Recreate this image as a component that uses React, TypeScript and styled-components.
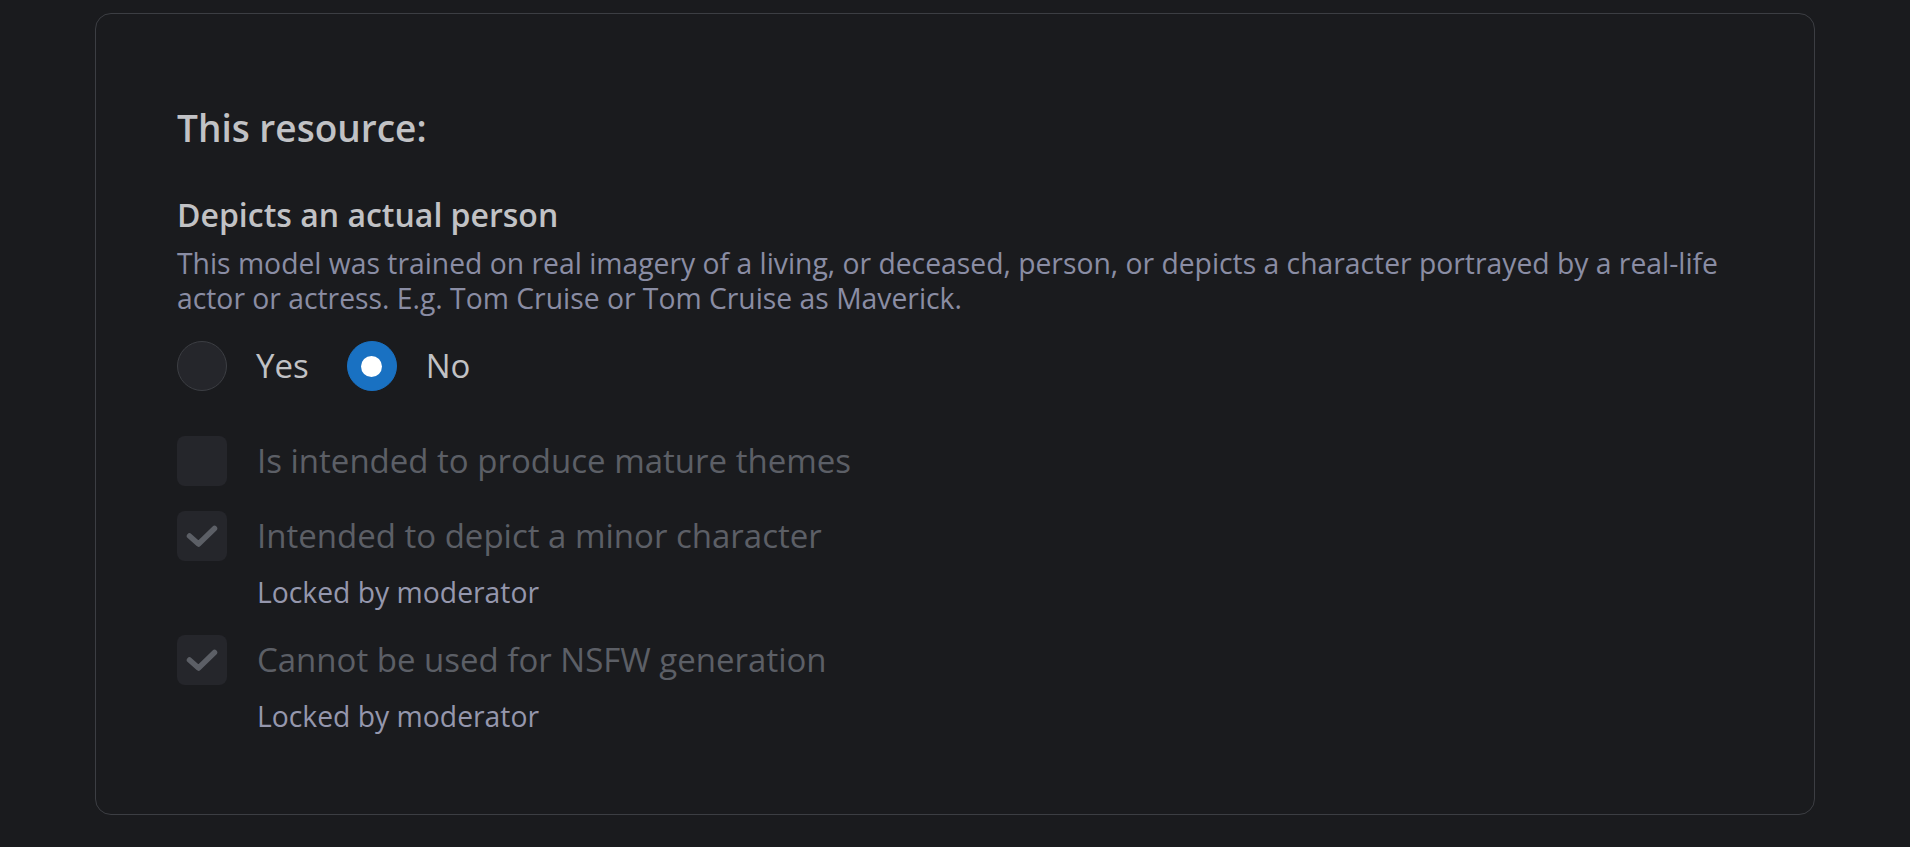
import { FC } from 'react';
import styled, { createGlobalStyle } from 'styled-components';

const colors = {
    body: '#1a1b1e',
    border: '#3c3e43',
    text: '#c1c2c5',
    dimmed: '#8a8da4',
    locked: '#9597ad',
    disabled: '#5c5f66',
    control: '#25262b',
    blue: '#1971c2',
};

const GlobalStyle = createGlobalStyle`
    html, body {
        margin: 0;
        padding: 0;
        background: ${colors.body};
        font-family: 'Open Sans', 'Noto Sans', sans-serif;
        color: ${colors.text};
    }
`;

const Page = styled('div')`
    padding: 13px 0;
`;

const Card = styled('section')`
    width: 1720px;
    box-sizing: border-box;
    margin: 0 auto;
    border: 1px solid ${colors.border};
    border-radius: 16px;
    padding: 92px 81px 80px;
    display: flex;
    flex-direction: column;
`;

const Title = styled('h2')`
    margin: 0;
    font-size: 37px;
    line-height: 44px;
    font-weight: 600;
    color: ${colors.text};
`;

const Section = styled('div')`
    margin-top: 46px;
    display: flex;
    flex-direction: column;
`;

const SectionTitle = styled('h3')`
    margin: 0;
    font-size: 32px;
    line-height: 38px;
    font-weight: 600;
    color: ${colors.text};
`;

const Description = styled('p')`
    margin: 12px 0 0;
    font-size: 28.3px;
    line-height: 35px;
    color: ${colors.dimmed};
`;

const RadioGroup = styled('div')`
    margin-top: 25px;
    display: flex;
    align-items: center;
    gap: 38px;
`;

const Option = styled('label')`
    display: flex;
    align-items: center;
    gap: 29px;
`;

const RadioCircle = styled('span')<{ checked?: boolean }>`
    width: 50px;
    height: 50px;
    box-sizing: border-box;
    border-radius: 50%;
    display: flex;
    align-items: center;
    justify-content: center;
    background: ${(p) => (p.checked ? colors.blue : colors.control)};
    border: 1.5px solid ${(p) => (p.checked ? colors.blue : colors.border)};

    &::after {
        content: '';
        display: ${(p) => (p.checked ? 'block' : 'none')};
        width: 21px;
        height: 21px;
        border-radius: 50%;
        background: #fff;
    }
`;

const OptionLabel = styled('span')<{ disabled?: boolean }>`
    font-size: 33px;
    line-height: 50px;
    color: ${(p) => (p.disabled ? colors.disabled : colors.text)};
`;

const CheckList = styled('div')`
    margin-top: 45px;
    display: flex;
    flex-direction: column;
    gap: 25px;
`;

const CheckRow = styled('div')`
    display: flex;
    align-items: flex-start;
    gap: 30px;
`;

const CheckBox = styled('span')`
    flex: none;
    width: 50px;
    height: 50px;
    border-radius: 8px;
    background: ${colors.control};
    display: flex;
    align-items: center;
    justify-content: center;
`;

const CheckBody = styled('div')`
    display: flex;
    flex-direction: column;
`;

const LockedNote = styled('span')`
    margin-top: 14px;
    font-size: 28.3px;
    line-height: 35px;
    color: ${colors.locked};
`;

const CheckMark = () => (
    <svg width="50" height="50" viewBox="0 0 50 50" fill="none">
        <polyline
            points="12.5,25 21.5,33 37.5,17.5"
            stroke={colors.disabled}
            strokeWidth="5.5"
            strokeLinecap="round"
            strokeLinejoin="round"
        />
    </svg>
);

interface CheckItemProps {
    label: string;
    checked?: boolean;
    note?: string;
}

const CheckItem: FC<CheckItemProps> = ({ label, checked, note }) => (
    <CheckRow>
        <CheckBox>{checked && <CheckMark />}</CheckBox>
        <CheckBody>
            <OptionLabel disabled>{label}</OptionLabel>
            {!!note && <LockedNote>{note}</LockedNote>}
        </CheckBody>
    </CheckRow>
);

const App = () => (
    <>
        <GlobalStyle />
        <Page>
            <Card>
                <Title>This resource:</Title>
                <Section>
                    <SectionTitle>Depicts an actual person</SectionTitle>
                    <Description>
                        This model was trained on real imagery of a living, or deceased, person, or depicts a character portrayed by a real-life actor or actress. E.g. Tom Cruise or Tom Cruise as Maverick.
                    </Description>
                    <RadioGroup>
                        <Option>
                            <RadioCircle />
                            <OptionLabel>Yes</OptionLabel>
                        </Option>
                        <Option>
                            <RadioCircle checked />
                            <OptionLabel>No</OptionLabel>
                        </Option>
                    </RadioGroup>
                </Section>
                <CheckList>
                    <CheckItem label="Is intended to produce mature themes" />
                    <CheckItem label="Intended to depict a minor character" checked note="Locked by moderator" />
                    <CheckItem label="Cannot be used for NSFW generation" checked note="Locked by moderator" />
                </CheckList>
            </Card>
        </Page>
    </>
);

export default App;
